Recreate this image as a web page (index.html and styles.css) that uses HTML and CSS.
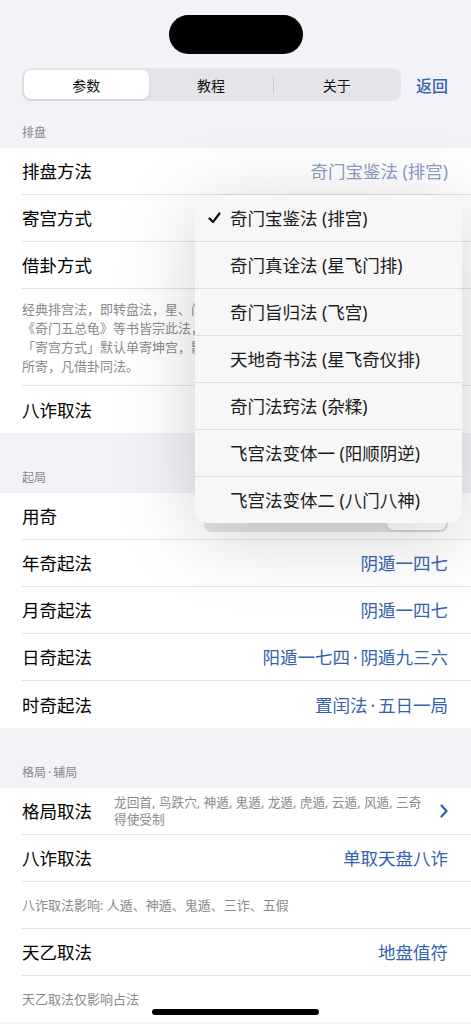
FILE: index.html
```html
<!DOCTYPE html>
<html>
<head>
    <title>参数</title>
    <link rel="stylesheet" href="styles.css">
</head>
<body>
    <div class="status">
        <div class="island"></div>
    </div>

    <header class="topbar">
        <div class="segmented">
            <button class="seg active">参数</button>
            <button class="seg">教程</button>
            <span class="seg-sep"></span>
            <button class="seg">关于</button>
        </div>
        <a class="back" href="#">返回</a>
    </header>

    <section class="group first">
        <div class="group-title">排盘</div>
        <div class="list">
            <div class="row">
                <span class="label">排盘方法</span>
                <span class="value dim">奇门宝鉴法 (排宫)</span>
            </div>
            <div class="row">
                <span class="label">寄宫方式</span>
            </div>
            <div class="row">
                <span class="label">借卦方式</span>
            </div>
            <div class="note long">
                经典排宫法，即转盘法，星、门<br>
                《奇门五总龟》等书皆宗此法，<br>
                「寄宫方式」默认单寄坤宫，影响<br>
                所寄，凡借卦同法。
            </div>
            <div class="row">
                <span class="label">八诈取法</span>
            </div>
        </div>
    </section>

    <section class="group">
        <div class="group-title">起局</div>
        <div class="list">
            <div class="row">
                <span class="label">用奇</span>
                <div class="mini-seg">
                    <span class="mini"></span>
                    <span class="mini"></span>
                    <span class="mini"></span>
                    <span class="mini active"></span>
                </div>
            </div>
            <div class="row">
                <span class="label">年奇起法</span>
                <span class="value">阴遁一四七</span>
            </div>
            <div class="row">
                <span class="label">月奇起法</span>
                <span class="value">阴遁一四七</span>
            </div>
            <div class="row">
                <span class="label">日奇起法</span>
                <span class="value">阳遁一七四&thinsp;·&thinsp;阴遁九三六</span>
            </div>
            <div class="row">
                <span class="label">时奇起法</span>
                <span class="value">置闰法&thinsp;·&thinsp;五日一局</span>
            </div>
        </div>
    </section>

    <section class="group">
        <div class="group-title">格局&thinsp;·&thinsp;辅局</div>
        <div class="list">
            <div class="row">
                <span class="label">格局取法</span>
                <span class="summary">龙回首, 鸟跌穴, 神遁, 鬼遁, 龙遁, 虎遁, 云遁, 风遁, 三奇得使受制</span>
                <svg class="chevron" width="8" height="14" viewBox="0 0 8 14">
                    <path d="M1.5 1.5 L6.5 7 L1.5 12.5" fill="none" stroke="#3462b1" stroke-width="2.2" stroke-linecap="round" stroke-linejoin="round"/>
                </svg>
            </div>
            <div class="row">
                <span class="label">八诈取法</span>
                <span class="value">单取天盘八诈</span>
            </div>
            <div class="note">八诈取法影响: 人遁、神遁、鬼遁、三诈、五假</div>
            <div class="row">
                <span class="label">天乙取法</span>
                <span class="value">地盘值符</span>
            </div>
            <div class="note">天乙取法仅影响占法</div>
        </div>
    </section>

    <!-- popup menu for 排盘方法 -->
    <ul class="menu">
        <li class="checked">
            <svg class="check" width="13" height="12" viewBox="0 0 13 12">
                <path d="M1.5 6.5 L5 10 L11.5 1.5" fill="none" stroke="#111" stroke-width="2.2" stroke-linecap="round" stroke-linejoin="round"/>
            </svg>
            奇门宝鉴法 (排宫)
        </li>
        <li>奇门真诠法 (星飞门排)</li>
        <li>奇门旨归法 (飞宫)</li>
        <li>天地奇书法 (星飞奇仪排)</li>
        <li>奇门法窍法 (杂糅)</li>
        <li>飞宫法变体一 (阳顺阴逆)</li>
        <li>飞宫法变体二 (八门八神)</li>
    </ul>

    <div class="home-bar"></div>
</body>
</html>
```

FILE: styles.css
```css
body {
    margin: 0;
    background-color: #f2f2f7;
    font-family: "Noto Sans", "Noto Sans CJK SC", sans-serif;
    color: #000;
    width: 471px;
    position: relative;
}

.status {
    display: flex;
    justify-content: center;
    padding-top: 15px;
}
.island {
    width: 134px;
    height: 39px;
    border-radius: 20px;
    background-color: #000;
}

.topbar {
    display: flex;
    align-items: center;
    padding: 14px 23px 0 22px;
}
.segmented {
    flex: 1;
    display: flex;
    align-items: center;
    height: 33px;
    padding: 2px;
    box-sizing: border-box;
    border-radius: 9px;
    background-color: #e4e4e9;
}
.seg {
    flex: 1;
    height: 29px;
    border: none;
    background: none;
    font-family: inherit;
    font-size: 14px;
    color: #111;
    padding: 0;
}
.seg.active {
    background-color: #fff;
    border-radius: 7px;
    box-shadow: 0 1px 3px rgba(0, 0, 0, 0.12);
}
.seg-sep {
    width: 1px;
    height: 18px;
    background-color: #c9c9ce;
}
.back {
    margin-left: 15px;
    font-size: 16px;
    font-weight: 500;
    color: #3462b1;
    text-decoration: none;
}

.group-title {
    padding: 37px 22px 7px;
    font-size: 12px;
    line-height: 16px;
    color: #86868b;
}
.group.first .group-title {
    padding-top: 24px;
}

.list {
    background-color: #fff;
    padding-left: 22px;
}
.row {
    display: flex;
    align-items: center;
    min-height: 46px;
    padding-right: 23px;
    border-bottom: 1px solid #e3e3e6;
}
.list > :last-child {
    border-bottom: none;
}
.list > .row:last-child {
    min-height: 47px;
}
.label {
    font-size: 17.5px;
    line-height: 24px;
    white-space: nowrap;
}
.value {
    margin-left: auto;
    font-size: 17.5px;
    line-height: 24px;
    color: #3462b1;
    white-space: nowrap;
}
.value.dim {
    color: #8b9ec3;
}

.note {
    padding: 14px 23px 13px 0;
    font-size: 13px;
    line-height: 19px;
    color: #8a8a8e;
    border-bottom: 1px solid #e3e3e6;
}
.note.long {
    padding-top: 11px;
    padding-bottom: 9px;
    white-space: nowrap;
}

.summary {
    flex: 1;
    margin: 0 6px 0 22px;
    font-size: 12.7px;
    line-height: 17.5px;
    color: #8a8a8e;
    padding: 5px 0;
}
.chevron {
    flex-shrink: 0;
}

.mini-seg {
    margin-left: auto;
    display: flex;
    width: 244px;
    height: 32px;
    padding: 2px;
    box-sizing: border-box;
    border-radius: 8px;
    background-color: #e4e4e9;
}
.mini {
    flex: 1;
    border-left: 1px solid #c9c9ce;
    margin: 6px 0;
}
.mini:first-child {
    border-left: none;
}
.mini.active {
    margin: 0;
    border-left: none;
    background-color: #fff;
    border-radius: 6px;
    box-shadow: 0 1px 3px rgba(0, 0, 0, 0.12);
}

.menu {
    position: absolute;
    top: 195px;
    left: 195px;
    width: 267px;
    margin: 0;
    padding: 0;
    list-style: none;
    background-color: #f7f7f7;
    border-radius: 13px;
    box-shadow: 0 12px 80px rgba(0, 0, 0, 0.18);
    overflow: hidden;
}
.menu li {
    position: relative;
    height: 46px;
    line-height: 46px;
    padding-left: 35px;
    font-size: 17.5px;
    color: #1a1a1a;
    border-bottom: 1px solid #dedede;
}
.menu li:last-child {
    border-bottom: none;
}
.check {
    position: absolute;
    left: 13px;
    top: 17px;
}

.home-bar {
    position: absolute;
    top: 1009px;
    left: 152px;
    width: 167px;
    height: 6px;
    border-radius: 3px;
    background-color: #000;
}
```
